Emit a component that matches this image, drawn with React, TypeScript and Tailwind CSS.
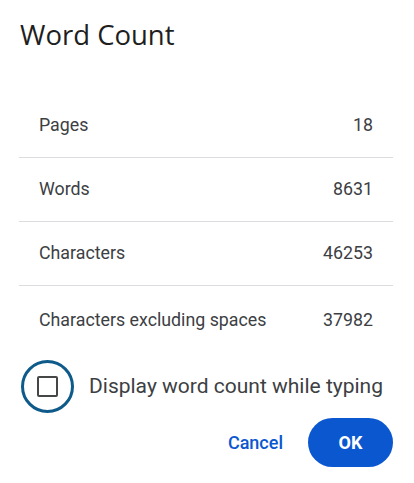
import React from "react";

const rows: [string, string][] = [
  ["Pages", "18"],
  ["Words", "8631"],
  ["Characters", "46253"],
  ["Characters excluding spaces", "37982"],
];

export default function App() {
  return (
    <div className="w-[414px] h-[483px] bg-white relative" style={{ fontFamily: "Roboto, 'Liberation Sans', sans-serif" }}>
      <div
        className="pl-[20px] pt-[19px] text-[27.5px] leading-[32px] text-[#1f1f1f]"
        style={{ fontFamily: "'Open Sans', Lato, sans-serif" }}
      >
        Word Count
      </div>
      <div className="ml-[19px] mr-[21px] mt-[43px]">
        {rows.map(([label, value], i) => (
          <div
            key={label}
            className={
              i < rows.length - 1
                ? "h-[64px] flex items-center justify-between pl-[20px] pr-[20px] border-b-[1.5px] border-[#dadce0] text-[17.8px] text-[#3c4043]"
                : "h-[68px] flex items-center justify-between pl-[20px] pr-[20px] text-[17.8px] text-[#3c4043]"
            }
          >
            <span>{label}</span>
            <span>{value}</span>
          </div>
        ))}
      </div>
      <div className="flex items-center ml-[21px] mt-[6px]">
        <div className="w-[53px] h-[53px] rounded-full border-[3px] border-[#0e5a8a] flex items-center justify-center">
          <div className="w-[21px] h-[21px] border-2 border-[#444746] rounded-[2px]" />
        </div>
        <span className="ml-[15px] text-[21px] text-[#3c4043]">Display word count while typing</span>
      </div>
      <div className="flex items-center justify-end mr-[21px] mt-[5px]">
        <button className="text-[18px] font-medium text-[#0b57d0] mr-[25px]">Cancel</button>
        <button className="w-[85px] h-[49px] rounded-full bg-[#0b57d0] text-white text-[18px] font-bold">OK</button>
      </div>
    </div>
  );
}
